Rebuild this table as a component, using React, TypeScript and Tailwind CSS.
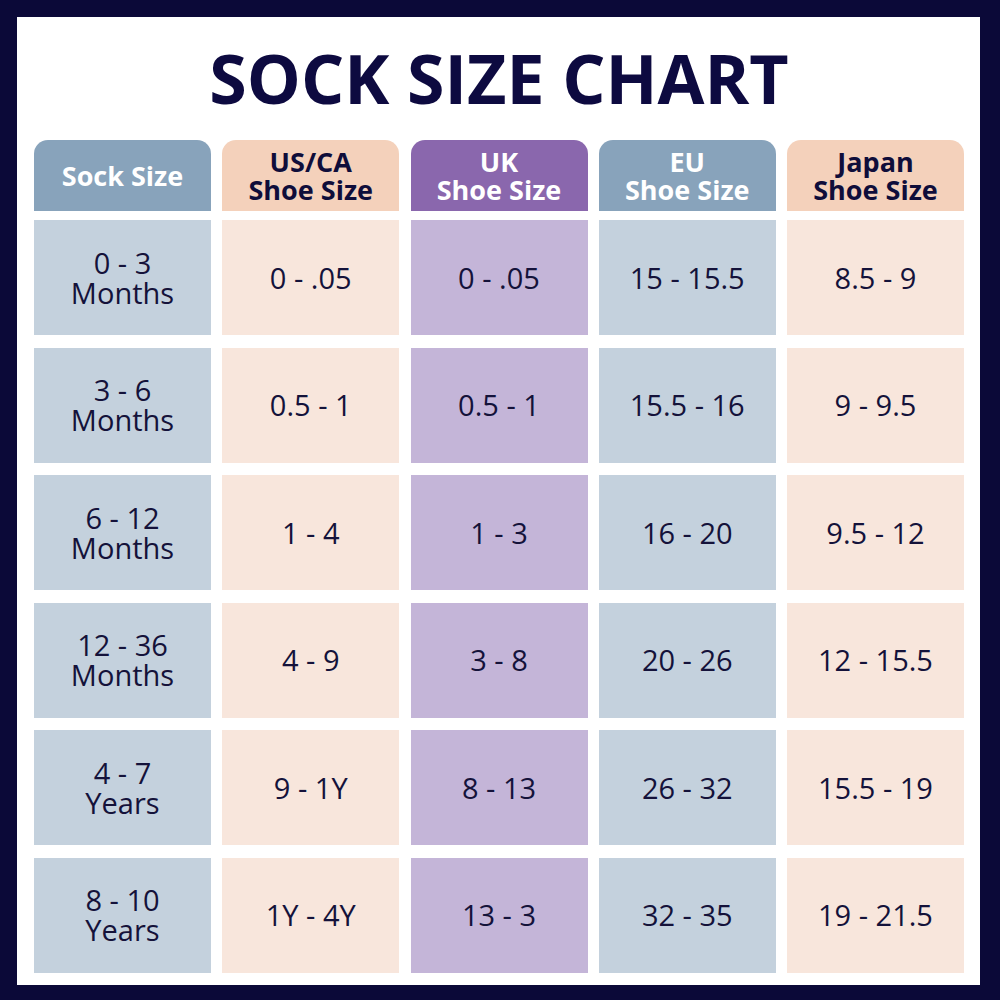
const headers = [
  { lines: ['Sock Size'], bg: 'bg-[#88a3bb]', text: 'text-white' },
  { lines: ['US/CA', 'Shoe Size'], bg: 'bg-[#f4d1bb]', text: 'text-[#0f0d3a]' },
  { lines: ['UK', 'Shoe Size'], bg: 'bg-[#8a67ad]', text: 'text-white' },
  { lines: ['EU', 'Shoe Size'], bg: 'bg-[#88a3bb]', text: 'text-white' },
  { lines: ['Japan', 'Shoe Size'], bg: 'bg-[#f4d1bb]', text: 'text-[#0f0d3a]' },
]

const cellBg = ['bg-[#c4d1dd]', 'bg-[#f8e6dc]', 'bg-[#c4b5d8]', 'bg-[#c4d1dd]', 'bg-[#f8e6dc]']

const rows: string[][][] = [
  [['0 - 3', 'Months'], ['0 - .05'], ['0 - .05'], ['15 - 15.5'], ['8.5 - 9']],
  [['3 - 6', 'Months'], ['0.5 - 1'], ['0.5 - 1'], ['15.5 - 16'], ['9 - 9.5']],
  [['6 - 12', 'Months'], ['1 - 4'], ['1 - 3'], ['16 - 20'], ['9.5 - 12']],
  [['12 - 36', 'Months'], ['4 - 9'], ['3 - 8'], ['20 - 26'], ['12 - 15.5']],
  [['4 - 7', 'Years'], ['9 - 1Y'], ['8 - 13'], ['26 - 32'], ['15.5 - 19']],
  [['8 - 10', 'Years'], ['1Y - 4Y'], ['13 - 3'], ['32 - 35'], ['19 - 21.5']],
]

export default function App() {
  return (
    <div
      className="w-[1000px] h-[1000px] bg-[#0b0938] pt-[17px] pl-[17px] pr-[20px] pb-[15px]"
      style={{ fontFamily: '"Open Sans", "Noto Sans", sans-serif' }}
    >
      <div className="w-full h-full bg-white pl-[17px] pr-[16px]">
        <h1 className="h-[123px] pt-[27px] text-center text-[68px] leading-[1] font-bold text-[#0d0a40]">
          SOCK SIZE CHART
        </h1>

        <div className="grid grid-cols-5 gap-x-[11.25px]">
          {headers.map((h, i) => (
            <div
              key={i}
              className={`h-[71px] pt-[1px] rounded-t-[14px] flex flex-col items-center justify-center text-[27px] leading-[28px] font-bold ${h.bg} ${h.text}`}
            >
              {h.lines.map((l) => (
                <span key={l}>{l}</span>
              ))}
            </div>
          ))}
        </div>

        {/* body rows */}
        <div className="mt-[9px] grid grid-cols-5 gap-x-[11.25px] gap-y-[12.6px]">
          {rows.map((row, r) =>
            row.map((cell, c) => (
              <div
                key={`${r}-${c}`}
                className={`h-[115px] flex flex-col items-center justify-center text-[29px] leading-[30px] text-[#14123a] ${cellBg[c]}`}
              >
                {cell.map((l) => (
                  <span key={l}>{l}</span>
                ))}
              </div>
            ))
          )}
        </div>
      </div>
    </div>
  )
}
